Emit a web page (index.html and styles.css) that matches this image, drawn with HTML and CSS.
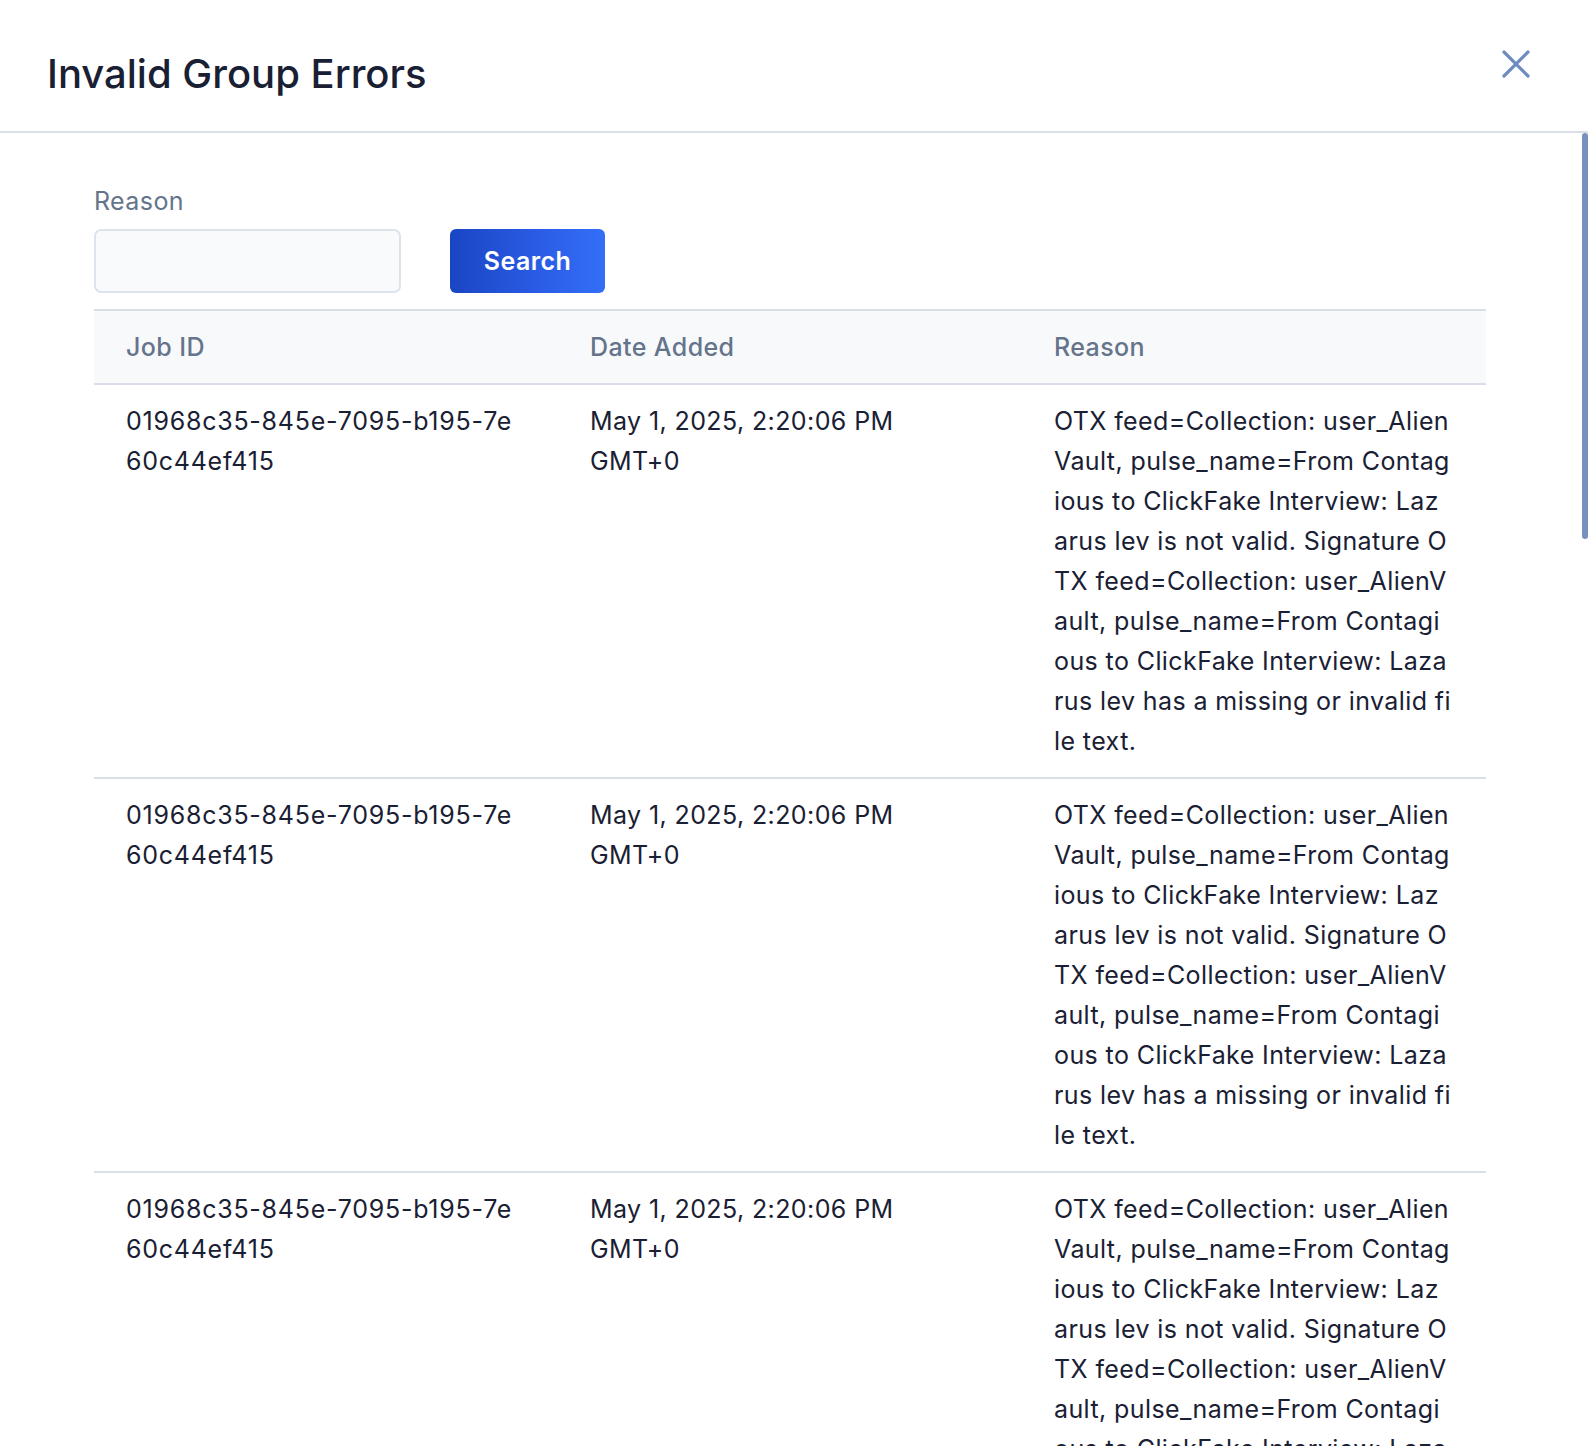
FILE: index.html
```html
<!DOCTYPE html>
<html>
<head>
  <meta charset="UTF-8">
  <title>Invalid Group Errors</title>
  <link rel="stylesheet" href="styles.css">
</head>
<body>
  <div class="modal">
    <div class="modal-header">
      <h2>Invalid Group Errors</h2>
      <button class="close-btn" aria-label="Close">
        <svg width="28" height="28" viewBox="0 0 28 28" fill="none" stroke="currentColor" stroke-width="3.2" stroke-linecap="round">
          <path d="M2 2 L26 26 M26 2 L2 26"/>
        </svg>
      </button>
    </div>

    <div class="modal-body">
      <div class="filter">
        <label for="reason">Reason</label>
        <div class="filter-row">
          <input type="text" id="reason">
          <button class="search-btn">Search</button>
        </div>
      </div>

      <table class="errors">
        <thead>
          <tr>
            <th>Job ID</th>
            <th>Date Added</th>
            <th>Reason</th>
          </tr>
        </thead>
        <tbody id="rows"></tbody>
      </table>
    </div>

    <div class="scroll-thumb"></div>
  </div>

  <script>
    // Строки таблицы — одинаковые ошибки из одного задания
    const reason = 'OTX feed=Collection: user_AlienVault, pulse_name=From Contagious to ClickFake Interview: Lazarus lev is not valid. Signature OTX feed=Collection: user_AlienVault, pulse_name=From Contagious to ClickFake Interview: Lazarus lev has a missing or invalid file text.';
    const rows = document.getElementById('rows');
    for (let i = 0; i < 10; i++) {
      const tr = document.createElement('tr');
      tr.innerHTML =
        '<td class="wrap job-id">01968c35-845e-7095-b195-7e60c44ef415</td>' +
        '<td>May 1, 2025, 2:20:06 PM <span class="tz">GMT+0</span></td>' +
        '<td class="wrap reason">' + reason + '</td>';
      rows.appendChild(tr);
    }
  </script>
</body>
</html>
```

FILE: styles.css
```css
html, body {
  margin: 0;
  height: 100%;
}
body {
  font-family: Inter, "Noto Sans", sans-serif;
  color: #1a2033;
  background-color: #fff;
}
.modal {
  position: relative;
  height: 100vh;
  display: flex;
  flex-direction: column;
}
.modal-header {
  display: flex;
  justify-content: space-between;
  align-items: flex-start;
  padding: 50px 58px 33px 47px;
  border-bottom: 2px solid #d9dee8;
}
.modal-header h2 {
  margin: 0;
  font-size: 40px;
  line-height: 48px;
  font-weight: 500;
  color: #1a2033;
}
.close-btn {
  padding: 0;
  border: none;
  background: none;
  color: #6f8cc2;
  cursor: pointer;
  width: 28px;
  height: 28px;
}
.close-btn svg {
  display: block;
}
.modal-body {
  flex: 1;
  overflow-y: auto;
  padding: 48px 102px 48px 94px;
  scrollbar-width: none;
}
.modal-body::-webkit-scrollbar {
  display: none;
}
/* ползунок прокрутки тела модалки */
.scroll-thumb {
  position: absolute;
  top: 133px;
  right: 0;
  width: 6px;
  height: 406px;
  background-color: #7891c0;
  border-radius: 3px;
}
.filter label {
  display: block;
  font-size: 25px;
  letter-spacing: 0.4px;
  line-height: 40px;
  color: #64748b;
  margin-bottom: 8px;
}
.filter-row {
  display: flex;
  gap: 49px;
}
.filter-row input {
  width: 307px;
  height: 64px;
  box-sizing: border-box;
  border: 2px solid #dde3ec;
  border-radius: 7px;
  background-color: #f8fafc;
  font-family: inherit;
  font-size: 24px;
  padding: 0 16px;
}
.search-btn {
  width: 155px;
  height: 64px;
  border: none;
  border-radius: 6px;
  background: linear-gradient(90deg, #1a45c4 0%, #2a5be4 55%, #346ff7 100%);
  color: #fff;
  font-family: inherit;
  font-size: 25px;
  letter-spacing: 0.4px;
  font-weight: 600;
  cursor: pointer;
}
.errors {
  width: 100%;
  margin-top: 16px;
  border-collapse: collapse;
  table-layout: fixed;
}
.errors th, .errors td {
  text-align: left;
  vertical-align: top;
  padding: 16px 32px;
  font-size: 25px;
  letter-spacing: 0.4px;
  line-height: 40px;
}
.errors th {
  font-weight: 500;
  color: #64748b;
  background-color: #f8f9fb;
  border-top: 2px solid #d9dee8;
  border-bottom: 2px solid #d9dee8;
}
.errors td {
  font-weight: 400;
  color: #1a2033;
  border-bottom: 2px solid #d9dee8;
}
.errors td.wrap {
  word-break: break-all;
}
.errors td.job-id {
  letter-spacing: 0.75px;
}
.errors td.reason {
  padding-right: 35px;
}
.tz {
  display: block;
}
```
